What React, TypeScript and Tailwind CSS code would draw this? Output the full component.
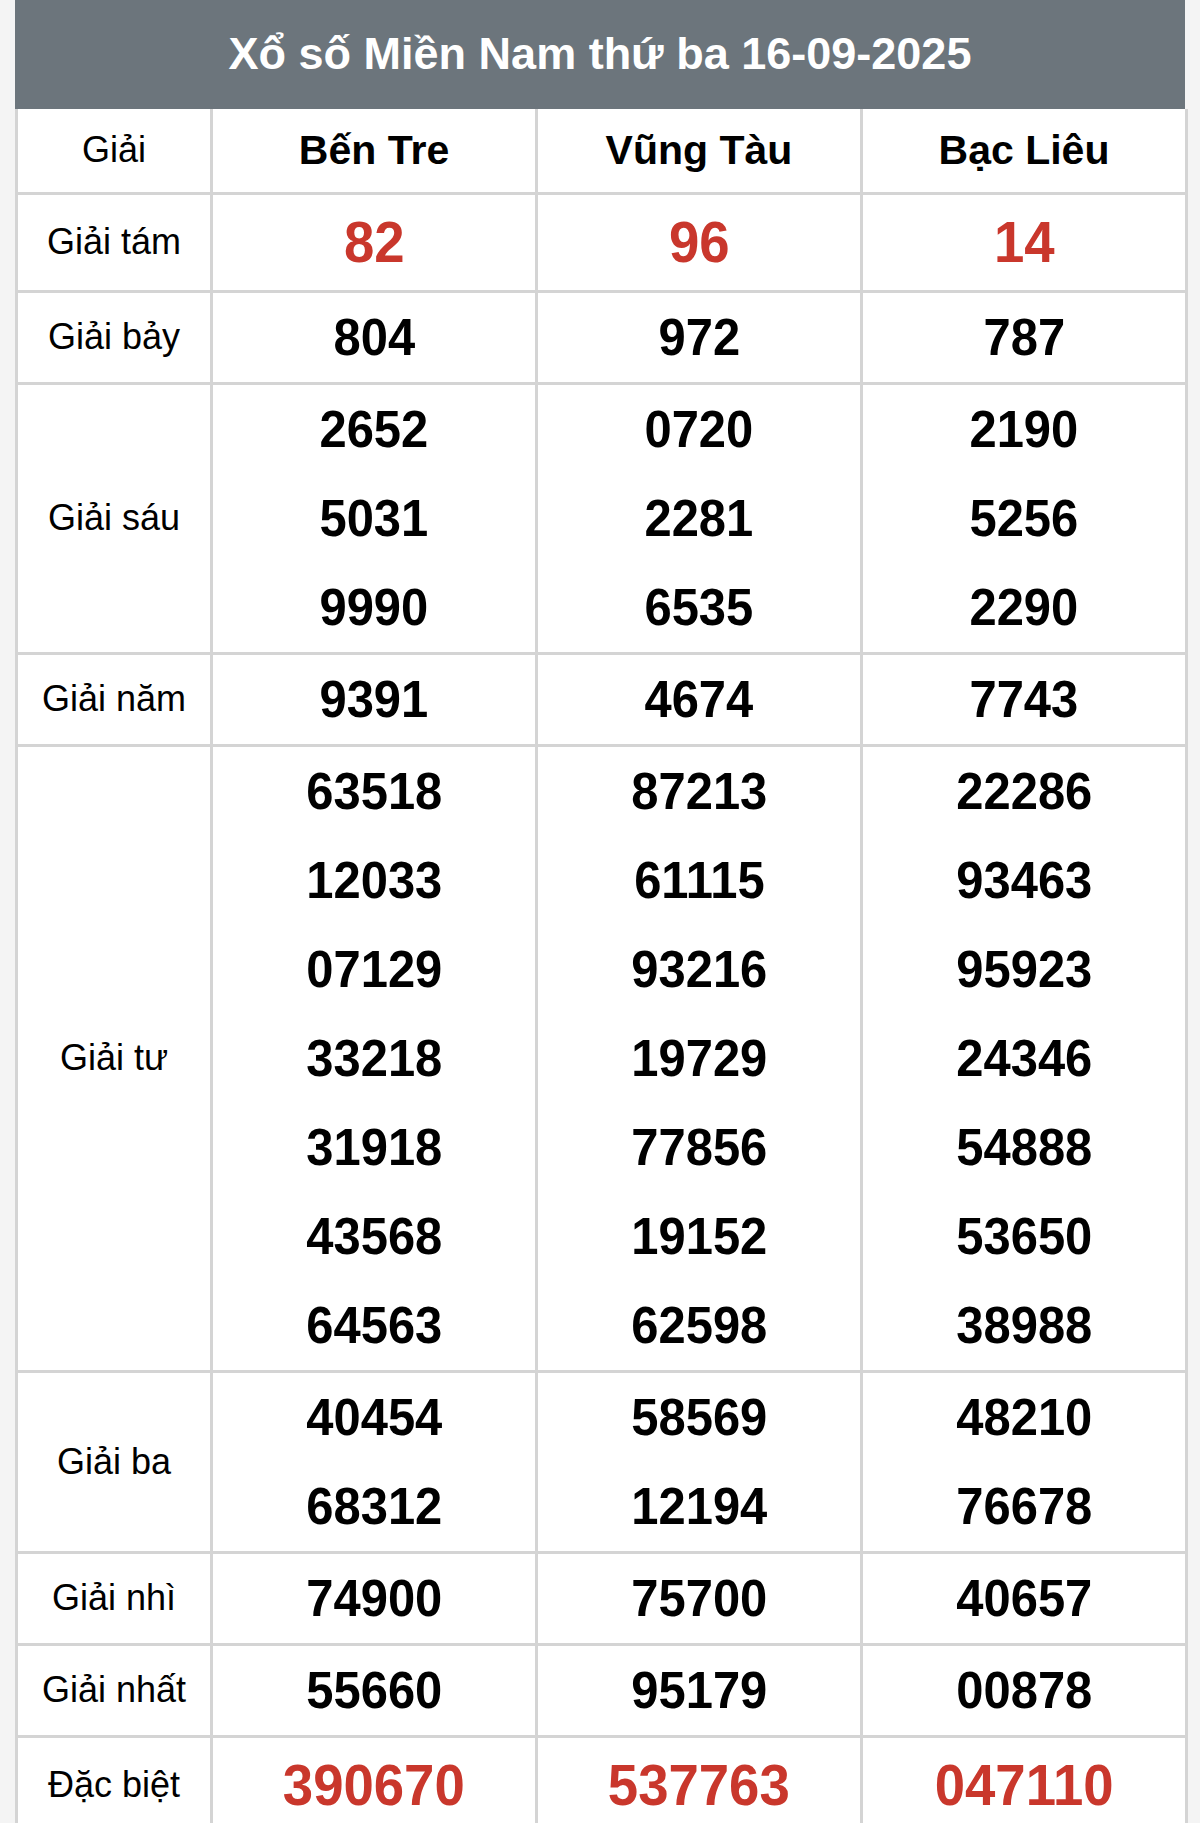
import React from "react";

type Row = { label: string; values: string[][]; red?: boolean; big?: boolean };

const rows: Row[] = [
  { label: "Giải tám", values: [["82"], ["96"], ["14"]], red: true, big: true },
  { label: "Giải bảy", values: [["804"], ["972"], ["787"]] },
  {
    label: "Giải sáu",
    values: [
      ["2652", "5031", "9990"],
      ["0720", "2281", "6535"],
      ["2190", "5256", "2290"],
    ],
  },
  { label: "Giải năm", values: [["9391"], ["4674"], ["7743"]] },
  {
    label: "Giải tư",
    values: [
      ["63518", "12033", "07129", "33218", "31918", "43568", "64563"],
      ["87213", "61115", "93216", "19729", "77856", "19152", "62598"],
      ["22286", "93463", "95923", "24346", "54888", "53650", "38988"],
    ],
  },
  {
    label: "Giải ba",
    values: [
      ["40454", "68312"],
      ["58569", "12194"],
      ["48210", "76678"],
    ],
  },
  { label: "Giải nhì", values: [["74900"], ["75700"], ["40657"]] },
  { label: "Giải nhất", values: [["55660"], ["95179"], ["00878"]] },
  { label: "Đặc biệt", values: [["390670"], ["537763"], ["047110"]], red: true, big: true },
];

export default function App() {
  return (
    <div
      className="w-[1200px] h-[1823px] overflow-hidden bg-[#f4f4f4] px-[15px]"
      style={{ fontFamily: '"Liberation Sans", Arial, sans-serif' }}
    >
      <div className="bg-white">
        <div className="h-[109px] pb-[2px] bg-[#6c757c] flex items-center justify-center text-white font-bold text-[45px]">
          Xổ số Miền Nam thứ ba 16-09-2025
        </div>
        <table className="w-[1170px] border-collapse table-fixed">
          <colgroup>
            <col className="w-[195px]" />
            <col className="w-[325px]" />
            <col className="w-[325px]" />
            <col className="w-[325px]" />
          </colgroup>
          <tbody>
            <tr className="h-[84px]">
              <td className="border-[3px] border-[#d4d4d4] border-t-0 text-center text-[36px] text-black">Giải</td>
              {["Bến Tre", "Vũng Tàu", "Bạc Liêu"].map((p) => (
                <td key={p} className="border-[3px] border-[#d4d4d4] border-t-0 text-center text-[41px] font-bold text-black">
                  {p}
                </td>
              ))}
            </tr>
            {rows.map((r) => (
              <tr key={r.label} className={r.big ? "h-[98px]" : ""}>
                <td className="border-[3px] border-[#d4d4d4] text-center text-[36px] text-black align-middle">
                  {r.label}
                </td>
                {r.values.map((col, i) => (
                  <td key={i} className="border-[3px] border-[#d4d4d4] text-center align-middle">
                    {col.map((n, j) => (
                      <div key={j} className="h-[89px] flex items-center justify-center">
                        <span
                          className={
                            r.big
                              ? "inline-block font-bold text-[58px] leading-none text-[#c9372c] scale-x-[0.94]"
                              : "inline-block font-bold text-[52px] leading-none text-black scale-x-[0.94]"
                          }
                        >
                          {n}
                        </span>
                      </div>
                    ))}
                  </td>
                ))}
              </tr>
            ))}
          </tbody>
        </table>
      </div>
    </div>
  );
}
